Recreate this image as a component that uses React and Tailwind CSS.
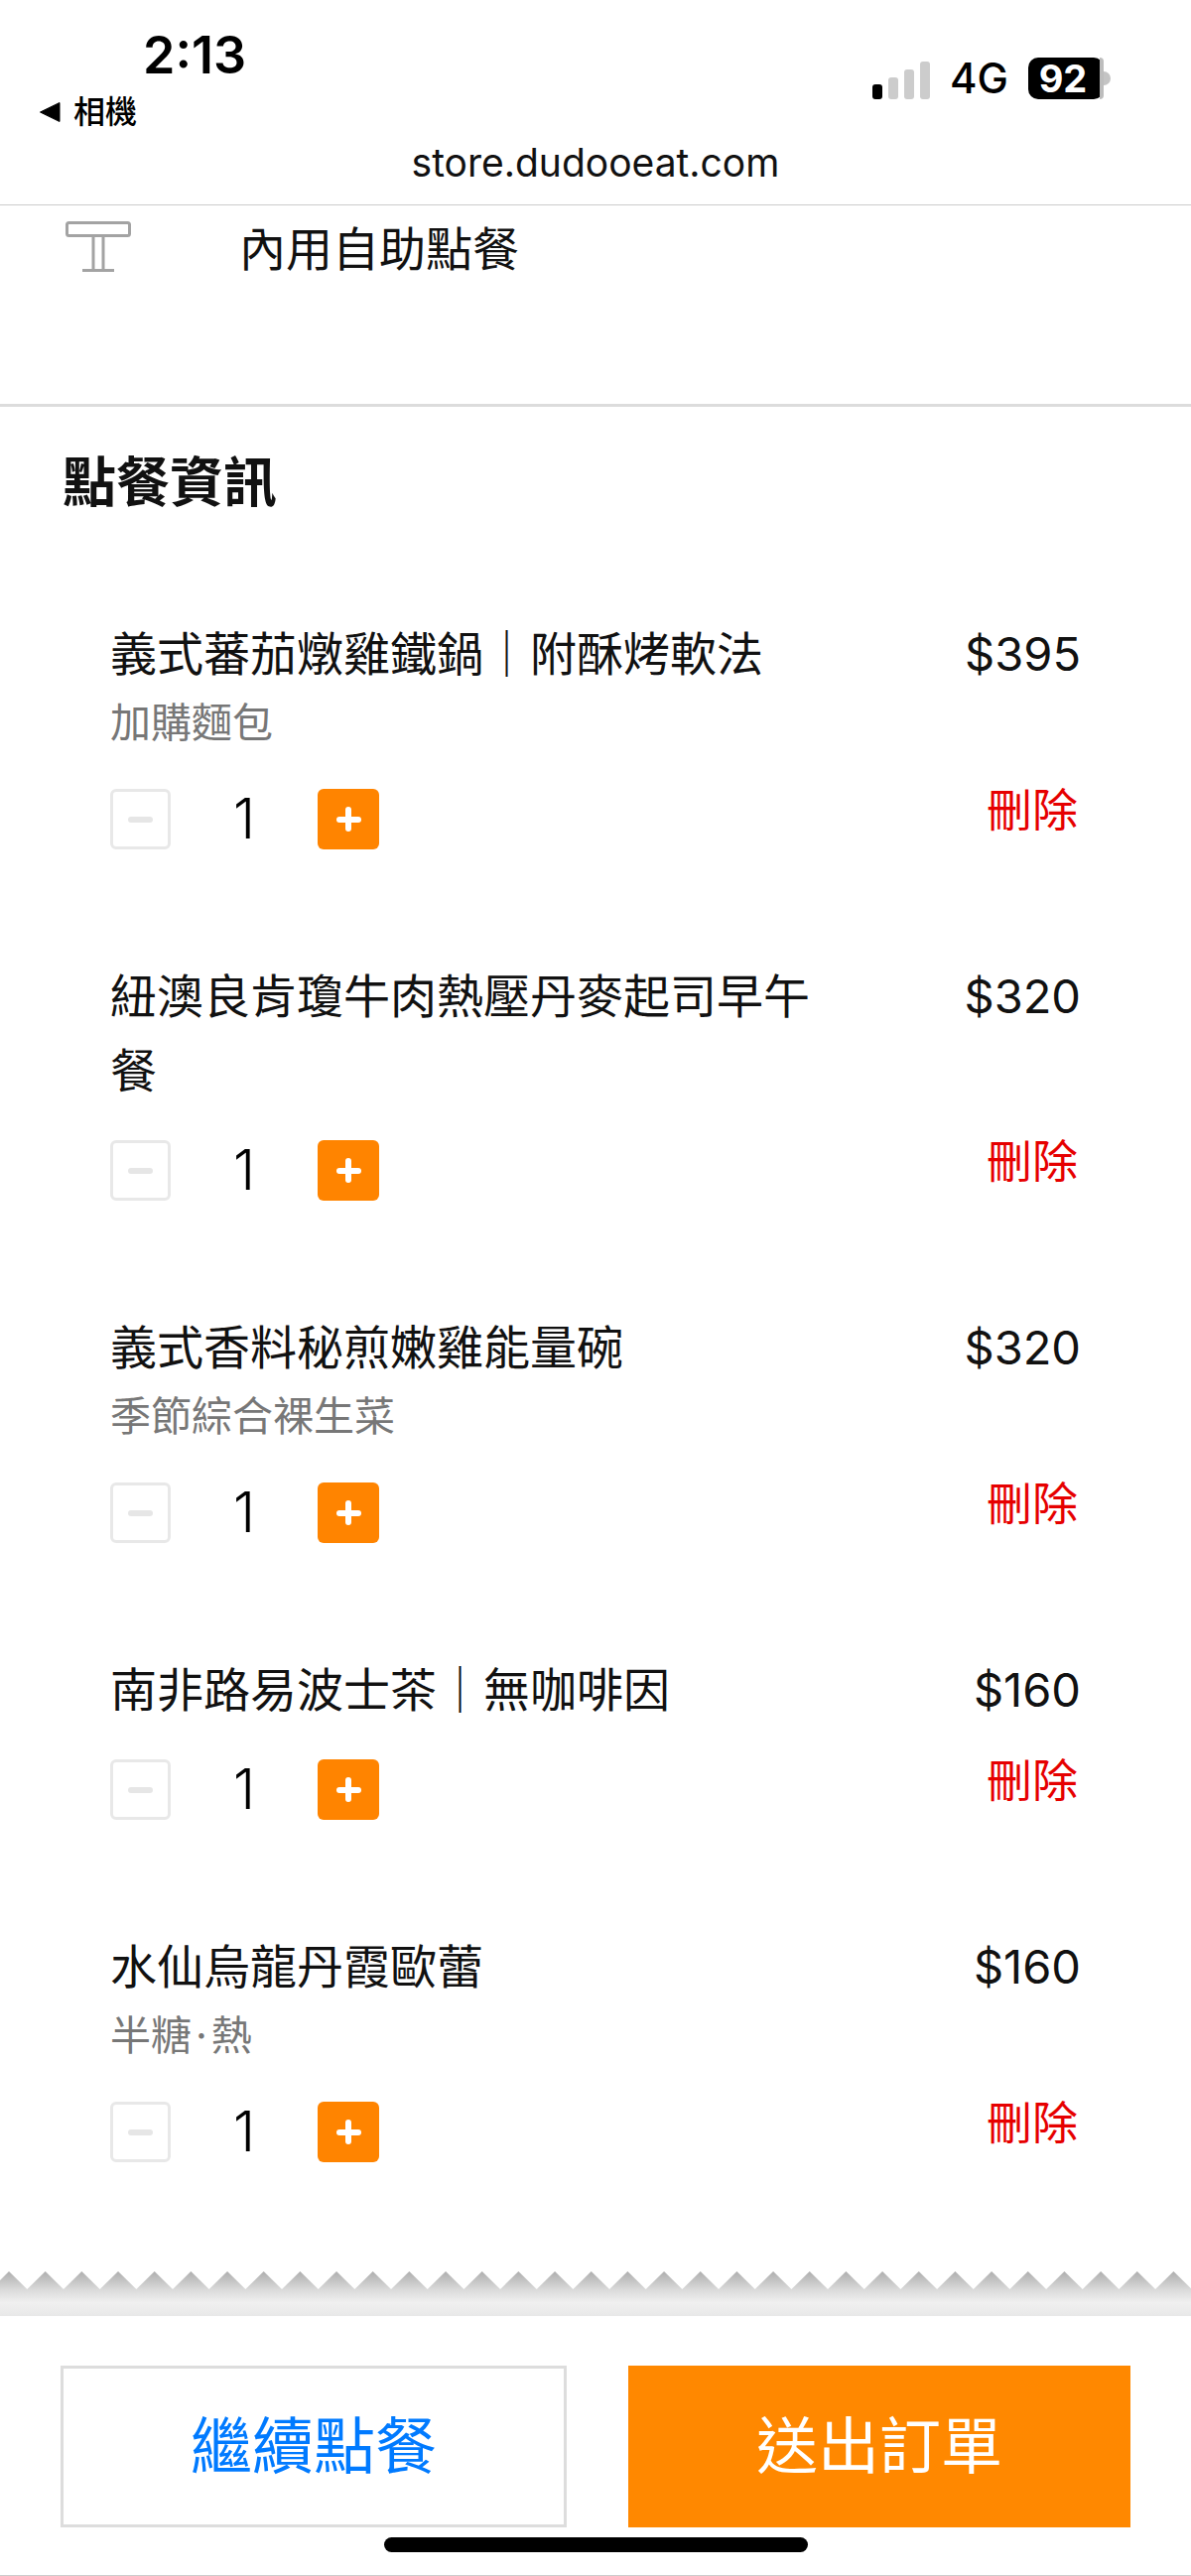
const FONT = "font-['Inter','Noto_Sans_CJK_TC',sans-serif]"

const items = [
  { name: ["義式蕃茄燉雞鐵鍋｜附酥烤軟法"], note: "加購麵包", price: "$395" },
  { name: ["紐澳良肯瓊牛肉熱壓丹麥起司早午", "餐"], price: "$320" },
  { name: ["義式香料秘煎嫩雞能量碗"], note: "季節綜合裸生菜", price: "$320" },
  { name: ["南非路易波士茶｜無咖啡因"], price: "$160" },
  { name: ["水仙烏龍丹霞歐蕾"], note: <>半糖<span className="mx-[4px]">‧</span>熱</>, price: "$160" },
]

function StatusBar() {
  return (
    <div className="h-[207px] border-b border-[#cccccc] flex flex-col">
      <div className="flex justify-between h-[141px]">
        <div>
          <div className="ml-[144px] pt-[30px] text-[52px] leading-[52px] font-semibold text-black">2:13</div>
          <div className="ml-[39px] mt-[13px] flex items-center gap-[13px]">
            <svg width="22" height="22" viewBox="0 0 22 22"><path d="M21 1.5 L1.5 11 L21 20.5 Z" fill="#000" stroke="#000" strokeLinejoin="round" /></svg>
            <span className="text-[32px] leading-[36px] font-medium text-black">相機</span>
          </div>
        </div>
        <div className="flex items-start mr-[81px] pt-[58px]">
          <div className="flex items-end gap-[6px] h-[42px]">
            <div className="w-[10px] h-[15px] rounded-[3px] bg-black" />
            <div className="w-[10px] h-[22px] rounded-[3px] bg-[#cccccc]" />
            <div className="w-[10px] h-[30px] rounded-[3px] bg-[#cccccc]" />
            <div className="w-[10px] h-[38px] rounded-[3px] bg-[#cccccc]" />
          </div>
          <div className="ml-[20px] text-[42px] leading-[42px] font-medium text-black">4G</div>
          <div className="ml-[20px] flex items-center">
            <div className="w-[76px] h-[42px] rounded-[10px] bg-black flex items-center justify-center relative">
              <span className="text-[38px] leading-[42px] font-bold text-white pr-[6px]">92</span>
              <div className="absolute right-0 top-0 bottom-0 w-[4px] rounded-r-[10px] bg-[#bdbdbd]" />
            </div>
            <div className="w-[7px] h-[14px] rounded-r-full bg-[#c4c4c4]" />
          </div>
        </div>
      </div>
      <div className="text-center text-[39px] leading-[46px] text-[#111111]">store.dudooeat.com</div>
    </div>
  )
}

function TableIcon() {
  return (
    <svg width="66" height="52" viewBox="0 0 66 52" fill="none" stroke="#a3a3a3" strokeWidth="3">
      <rect x="1.5" y="1.5" width="63" height="13" rx="2" />
      <path d="M28 15 V49 M38 15 V49 M17 49.5 H49" />
    </svg>
  )
}

function QtyRow() {
  return (
    <div className="flex items-center">
      <div className="w-[61px] h-[61px] rounded-[6px] border-[3px] border-[#e8e8e8] flex items-center justify-center">
        <div className="w-[25px] h-[6px] rounded-full bg-[#e6e6e6]" />
      </div>
      <div className="w-[148px] text-center text-[56px] leading-[61px] font-light text-black">1</div>
      <div className="w-[62px] h-[61px] rounded-[6px] bg-[#ff8400] flex items-center justify-center relative">
        <div className="w-[25px] h-[6px] rounded-full bg-white" />
        <div className="absolute w-[6px] h-[25px] rounded-full bg-white" />
      </div>
    </div>
  )
}

function Item({ item }) {
  return (
    <div className="mb-[110px]">
      <div className="flex justify-between">
        <div className="w-[720px]">
          {item.name.map((line) => (
            <div key={line} className="text-[47px] leading-[75px] text-[#111111]">{line}</div>
          ))}
          {item.note && <div className="text-[41px] leading-[64px] mb-[2px] text-[#777777]">{item.note}</div>}
        </div>
        <div className="text-[47px] leading-[75px] text-[#111111]">{item.price}</div>
      </div>
      <div className="mt-[33px] flex justify-between items-start">
        <QtyRow />
        <div className="text-[46px] leading-[46px] text-[#e60000] mr-[3px] -mt-[2px]">刪除</div>
      </div>
    </div>
  )
}

function Zigzag() {
  // grey strip whose upper edge is cut into teeth
  const step = 36.67
  const pts = ["0,45"]
  pts.push("0,9")
  for (let i = 0; i < 34; i++) {
    const x = 9 + i * step
    pts.push(`${x},0`, `${x + step / 2},18`)
  }
  pts.push("1200,9", "1200,45")
  return (
    <svg width="1200" height="45" viewBox="0 0 1200 45" className="block">
      <defs>
        <linearGradient id="tear" x1="0" y1="0" x2="0" y2="1">
          <stop offset="0" stopColor="#aeaeae" />
          <stop offset="0.4" stopColor="#d9d9d9" />
          <stop offset="0.7" stopColor="#f0f0f0" />
          <stop offset="1" stopColor="#e8e8e8" />
        </linearGradient>
      </defs>
      <polygon points={pts.join(" ")} fill="url(#tear)" />
    </svg>
  )
}

export default function App() {
  return (
    <div className={`w-[1200px] h-[2596px] bg-white overflow-hidden flex flex-col ${FONT}`}>
      <StatusBar />
      <div className="h-[200px] flex items-start border-b-[3px] border-[#dcdcdc] box-content -mb-[1px]">
        <div className="ml-[66px] mt-[16px]"><TableIcon /></div>
        <div className="ml-[109px] mt-[13px] text-[47px] leading-[62px] text-[#111111]">內用自助點餐</div>
      </div>
      <div className="px-[63px] pt-[46px] text-[54px] leading-[64px] font-bold text-[#111111]">點餐資訊</div>
      <div className="pl-[111px] pr-[111px] pt-[102px] h-[1770px] overflow-hidden">
        {items.map((item) => (
          <Item key={item.name[0]} item={item} />
        ))}
      </div>
      <Zigzag />
      <div className="flex-1 relative">
        <div className="flex justify-between pl-[61px] pr-[61px] pt-[50px]">
          <div className="w-[510px] h-[163px] border-[3px] border-[#dddddd] flex items-center justify-center text-[62px] text-[#007aff]">繼續點餐</div>
          <div className="w-[506px] h-[163px] bg-[#ff8800] flex items-center justify-center text-[62px] text-white">送出訂單</div>
        </div>
        <div className="mt-[10px] mx-auto w-[427px] h-[15px] rounded-full bg-black" />
        <div className="absolute bottom-0 left-0 right-0 h-[1px] bg-[#cccccc]" />
      </div>
    </div>
  )
}
